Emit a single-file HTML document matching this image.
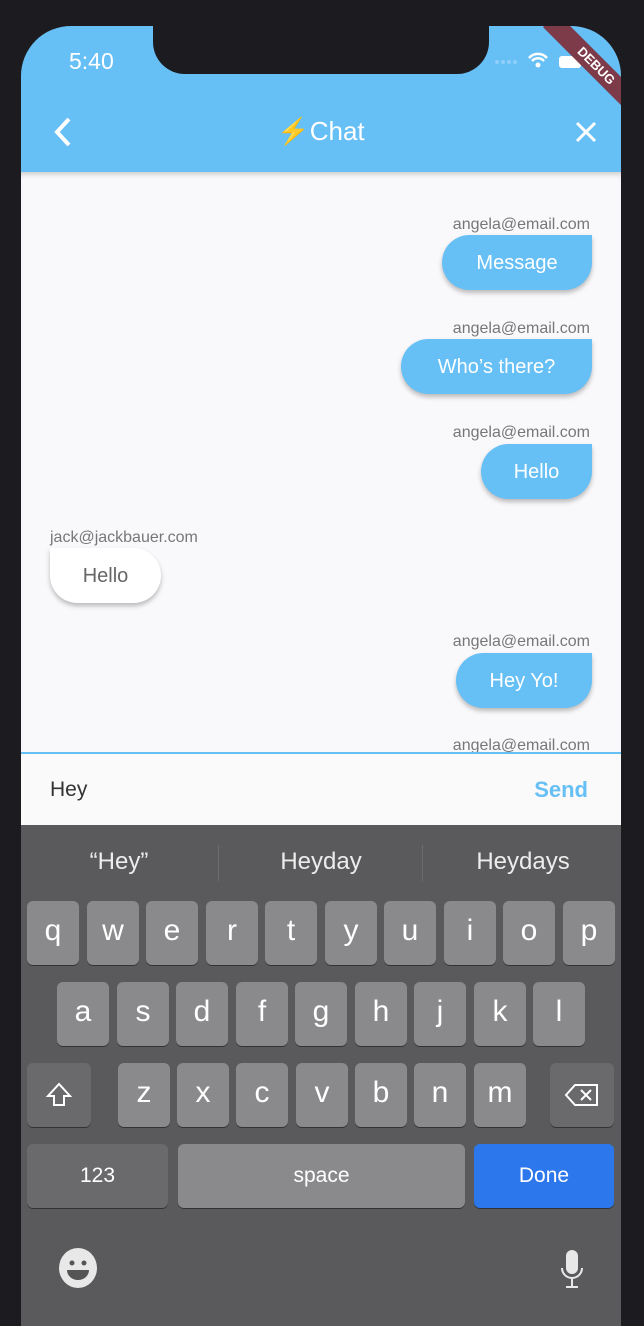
<!DOCTYPE html>
<html><head><style>
body{margin:0;width:644px;height:1290px;background:#1c1b1f;overflow:hidden;font-family:"Liberation Sans",sans-serif;position:relative}
.screen{position:absolute;left:21px;top:26px;width:600px;height:1300px;border-radius:50px 50px 0 0;overflow:hidden;background:#5a5a5c}
.bar{position:absolute;left:0;top:0;width:600px;height:146px;background:#66bff5}
.notch{position:absolute;left:132px;top:-5px;width:336px;height:53px;background:#1c1b1f;border-radius:0 0 32px 32px}
.chat{position:absolute;left:0;top:146px;width:600px;height:580px;background:#f9f8fa;box-shadow:inset 0 6px 6px -4px rgba(0,0,0,.2)}
.lbl{position:absolute;font-size:16px;color:#777}
.b{position:absolute;height:55px;line-height:57px;font-size:20px;color:#fff;background:#66bff5;text-align:center;border-radius:28px 0 28px 28px;box-shadow:0 3px 5px rgba(0,0,0,.25)}
.input{position:absolute;left:0;top:726px;width:600px;height:71px;background:#fafafa;border-top:2px solid #66bff5}
.k{position:absolute;width:52px;height:64px;background:#8a8a8c;border-radius:6px;color:#fff;font-size:30px;text-align:center;line-height:60px;box-shadow:0 1px 0 #333}
.d{background:#6a6a6c}
.sg{position:absolute;top:848px;font-size:24px;color:#ececec;text-align:center;width:200px}
</style></head><body>
<div class="screen">
<div class="bar"></div>
<div class="notch"></div>
<div style="position:absolute;left:48px;top:22px;color:#fff;font-size:23px">5:40</div>
<svg style="position:absolute;left:470px;top:24px" width="90" height="24"><g fill="#8fd0fa"><circle cx="6" cy="12" r="2"/><circle cx="12" cy="12" r="2"/><circle cx="18" cy="12" r="2"/><circle cx="24" cy="12" r="2"/></g><path d="M38 8a12 12 0 0 1 18 0M41 11a8 8 0 0 1 12 0" stroke="#fff" stroke-width="2.5" fill="none"/><circle cx="47" cy="15" r="2.5" fill="#fff"/><rect x="68" y="6" width="22" height="12" rx="3" fill="#fff"/></svg>
<div style="position:absolute;left:510px;top:30px;width:130px;height:20px;background:#7d3a48;transform:rotate(45deg);color:#fff;font-size:13px;font-weight:bold;text-align:center;line-height:20px">DEBUG</div>
<svg style="position:absolute;left:30px;top:90px" width="24" height="32"><path d="M18 3L6 16l12 13" stroke="#fff" stroke-width="4" fill="none"/></svg>
<div style="position:absolute;left:0;width:600px;top:90px;text-align:center;color:#fff;font-size:26px"><span style="color:#e9c23a">⚡</span>Chat</div>
<svg style="position:absolute;left:553px;top:94px" width="24" height="24"><path d="M3 3l18 18M21 3L3 21" stroke="#fff" stroke-width="3"/></svg>
<div class="chat"></div>
<div class="lbl" style="right:31px;top:190px">angela@email.com</div>
<div class="b" style="left:421px;top:209px;width:150px">Message</div>
<div class="lbl" style="right:31px;top:294px">angela@email.com</div>
<div class="b" style="left:380px;top:313px;width:191px">Who’s there?</div>
<div class="lbl" style="right:31px;top:398px">angela@email.com</div>
<div class="b" style="left:460px;top:418px;width:111px">Hello</div>
<div class="lbl" style="left:29px;top:503px">jack@jackbauer.com</div>
<div class="b" style="left:29px;top:522px;width:111px;background:#fff;color:#666;border-radius:0 28px 28px 28px">Hello</div>
<div class="lbl" style="right:31px;top:607px">angela@email.com</div>
<div class="b" style="left:435px;top:627px;width:136px">Hey Yo!</div>
<div class="lbl" style="right:31px;top:711px">angela@email.com</div>
<div class="input"><div style="position:absolute;left:29px;top:24px;font-size:21px;color:#333">Hey</div><div style="position:absolute;right:33px;top:23px;font-size:22px;font-weight:bold;color:#66bff5">Send</div></div>
</div>
<div style="position:absolute;left:218px;top:845px;width:1px;height:36px;background:#6c6c6e"></div>
<div style="position:absolute;left:422px;top:845px;width:1px;height:36px;background:#6c6c6e"></div>
<div class="sg" style="left:19px">“Hey”</div><div class="sg" style="left:221px">Heyday</div><div class="sg" style="left:423px">Heydays</div>
<div class="k" style="left:27px;top:901px">q</div><div class="k" style="left:87px;top:901px">w</div><div class="k" style="left:146px;top:901px">e</div><div class="k" style="left:206px;top:901px">r</div><div class="k" style="left:265px;top:901px">t</div><div class="k" style="left:325px;top:901px">y</div><div class="k" style="left:384px;top:901px">u</div><div class="k" style="left:444px;top:901px">i</div><div class="k" style="left:503px;top:901px">o</div><div class="k" style="left:563px;top:901px">p</div>
<div class="k" style="left:57px;top:982px">a</div><div class="k" style="left:117px;top:982px">s</div><div class="k" style="left:176px;top:982px">d</div><div class="k" style="left:236px;top:982px">f</div><div class="k" style="left:295px;top:982px">g</div><div class="k" style="left:355px;top:982px">h</div><div class="k" style="left:414px;top:982px">j</div><div class="k" style="left:474px;top:982px">k</div><div class="k" style="left:533px;top:982px">l</div>
<div class="k d" style="left:27px;top:1063px;width:64px"><svg width="30" height="30" style="margin-top:17px"><path d="M15 4L4 16h6v9h10v-9h6z" stroke="#fff" stroke-width="2" fill="none"/></svg></div>
<div class="k" style="left:118px;top:1063px">z</div><div class="k" style="left:177px;top:1063px">x</div><div class="k" style="left:236px;top:1063px">c</div><div class="k" style="left:296px;top:1063px">v</div><div class="k" style="left:355px;top:1063px">b</div><div class="k" style="left:414px;top:1063px">n</div><div class="k" style="left:474px;top:1063px">m</div>
<div class="k d" style="left:550px;top:1063px;width:64px"><svg width="36" height="26" style="margin-top:19px"><path d="M11 3h22v20H11L2 13z" stroke="#fff" stroke-width="2" fill="none"/><path d="M17 8l10 10M27 8L17 18" stroke="#fff" stroke-width="2"/></svg></div>
<div class="k d" style="left:27px;top:1144px;width:141px;font-size:21px;line-height:64px">123</div>
<div class="k" style="left:178px;top:1144px;width:287px;font-size:21px;line-height:64px">space</div>
<div class="k" style="left:474px;top:1144px;width:140px;font-size:21px;line-height:64px;background:#2d77ec">Done</div>
<svg style="position:absolute;left:58px;top:1248px" width="40" height="40"><ellipse cx="20" cy="20" rx="19" ry="20" fill="#e8e8e8"/><circle cx="14" cy="15" r="2.5" fill="#555"/><circle cx="26" cy="15" r="2.5" fill="#555"/><path d="M9 22h22a11 10 0 0 1-22 0z" fill="#555"/></svg>
<svg style="position:absolute;left:560px;top:1250px" width="24" height="40"><rect x="6" y="0" width="12" height="24" rx="6" fill="#e8e8e8"/><path d="M2 18a10 10 0 0 0 20 0M12 28v8M6 37h12" stroke="#e8e8e8" stroke-width="2" fill="none"/></svg>
</body></html>
